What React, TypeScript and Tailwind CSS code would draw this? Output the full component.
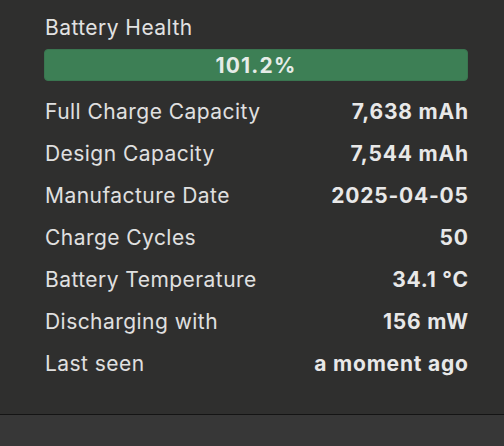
const ROWS = [
  ['Full Charge Capacity', '7,638 mAh'],
  ['Design Capacity', '7,544 mAh'],
  ['Manufacture Date', '2025-04-05'],
  ['Charge Cycles', '50'],
  ['Battery Temperature', '34.1 °C'],
  ['Discharging with', '156 mW'],
  ['Last seen', 'a moment ago'],
];

export default function App() {
  return (
    <div
      className="w-[504px] h-[446px] bg-[#2f2f2e] flex flex-col overflow-hidden"
      style={{ fontFamily: 'Inter, "Noto Sans", sans-serif' }}
    >
      <div className="flex-1 pt-[16px] pl-[44px] pr-[36px]">
        <div className="h-[24px] leading-[24px] text-[21px] tracking-[0.45px] text-[#e2e2e2] pl-px">Battery Health</div>
        <div className="mt-[9px] h-[32px] rounded-[4px] bg-[#3d7f55] border border-[#3a7550] flex items-center justify-center">
          <span className="text-[21px] font-bold text-[#e6ece8] tracking-[1.2px] translate-y-px">101.2%</span>
        </div>
        <div className="mt-[10px] flex flex-col">
          {ROWS.map(([label, value]) => (
            <div key={label} className="h-[42px] flex items-center justify-between pl-px">
              <span className="text-[21px] tracking-[0.45px] text-[#e0e0e0]">{label}</span>
              <span className="text-[21px] font-bold tracking-[0.8px] text-[#e8e8e8] -mr-[0.8px]">{value}</span>
            </div>
          ))}
        </div>
      </div>
      <div className="h-[32px] border-t border-[#141414] bg-[#373737]" />
    </div>
  );
}
